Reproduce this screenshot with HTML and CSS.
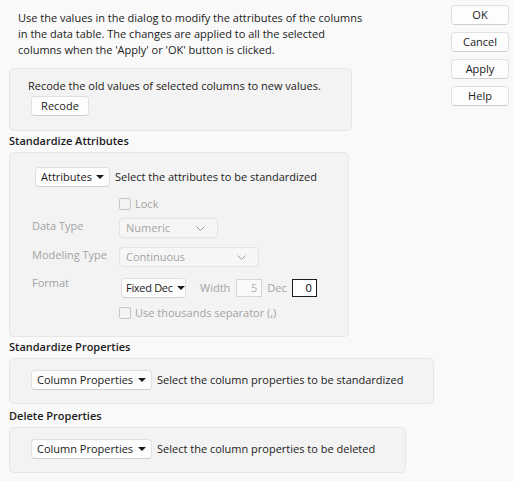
FILE: index.html
```html
<!DOCTYPE html>
<html lang="en">

<head>
    <meta charset="UTF-8">
    <title>Standardize Attributes</title>
    <link rel="stylesheet" href="styles.css">
</head>

<body>
    <div class="dialog">
        <div class="main">
            <p class="intro">Use the values in the dialog to modify the attributes of the columns<br>in the data table. The changes are applied to all the selected<br>columns when the 'Apply' or 'OK' button is clicked.</p>

            <div class="panel recode-panel">
                <div class="panel-text">Recode the old values of selected columns to new values.</div>
                <button class="btn recode-btn">Recode</button>
            </div>

            <h2 class="section-title">Standardize Attributes</h2>
            <div class="panel attr-panel">
                <div class="picker-row attr-picker">
                    <button class="menu-btn attr-btn">Attributes <span class="caret"></span></button>
                    <span>Select the attributes to be standardized</span>
                </div>

                <div class="field-row lock-row">
                    <span class="field-label"></span>
                    <label class="check disabled"><span class="box"></span>Lock</label>
                </div>
                <div class="field-row type-row">
                    <span class="field-label">Data Type</span>
                    <div class="combo combo-numeric">Numeric
                        <svg class="chevron" width="9" height="5" viewBox="0 0 9 5"><path d="M0.5 0.5 L4.5 4.5 L8.5 0.5" /></svg>
                    </div>
                </div>
                <div class="field-row modeling-row">
                    <span class="field-label">Modeling Type</span>
                    <div class="combo combo-modeling">Continuous
                        <svg class="chevron" width="9" height="5" viewBox="0 0 9 5"><path d="M0.5 0.5 L4.5 4.5 L8.5 0.5" /></svg>
                    </div>
                </div>
                <div class="field-row format-row">
                    <span class="field-label">Format</span>
                    <div class="format-controls">
                        <button class="menu-btn fixed-btn">Fixed Dec <span class="caret"></span></button>
                        <span class="muted width-label">Width</span>
                        <span class="num-box disabled">5</span>
                        <span class="muted dec-label">Dec</span>
                        <span class="num-box active">0</span>
                    </div>
                </div>
                <div class="field-row sep-row">
                    <span class="field-label"></span>
                    <label class="check disabled"><span class="box"></span>Use thousands separator (,)</label>
                </div>
            </div>

            <h2 class="section-title">Standardize Properties</h2>
            <div class="panel props-panel">
                <div class="picker-row">
                    <button class="menu-btn props-btn">Column Properties <span class="caret"></span></button>
                    <span>Select the column properties to be standardized</span>
                </div>
            </div>

            <h2 class="section-title delete-title">Delete Properties</h2>
            <div class="panel delete-panel">
                <div class="picker-row">
                    <button class="menu-btn props-btn">Column Properties <span class="caret"></span></button>
                    <span>Select the column properties to be deleted</span>
                </div>
            </div>
        </div>

        <div class="actions">
            <button class="btn">OK</button>
            <button class="btn">Cancel</button>
            <button class="btn">Apply</button>
            <button class="btn">Help</button>
        </div>
    </div>
</body>

</html>
```

FILE: styles.css
```css
body {
    margin: 0;
    background: #f9f9f9;
    color: #1b1b1b;
    font-family: 'Segoe UI', 'Open Sans', sans-serif;
    font-size: 11px;
    line-height: 16px;
}

.dialog {
    display: flex;
    justify-content: space-between;
    padding: 5px 5px 0 9px;
}

.main {
    display: flex;
    flex-direction: column;
    align-items: flex-start;
}

.intro {
    margin: 5px 0 10px 9px;
}

.panel {
    background: #f3f3f3;
    border: 1px solid #e6e6e6;
    border-radius: 5px;
    box-sizing: border-box;
}

.recode-panel {
    width: 343px;
    height: 63px;
    padding: 9px 0 0 18px;
}

.attr-panel {
    width: 340px;
    height: 185px;
    padding: 14px 0 0 22px;
}

.props-panel {
    width: 425px;
    height: 46px;
    padding: 11px 0 0 21px;
}

.delete-panel {
    width: 397px;
    height: 46px;
    padding: 11px 0 0 21px;
}

.section-title {
    margin: 2px 0 3px 0;
    font-size: 11px;
    font-weight: 600;
    line-height: 16px;
}

.delete-title {
    margin-top: 4px;
}

.btn {
    display: block;
    height: 20px;
    padding: 0;
    font: inherit;
    color: #1b1b1b;
    background: #fdfdfd;
    border: 1px solid #e0e0e0;
    border-bottom-color: #cfcfcf;
    border-radius: 4px;
}

.recode-btn {
    width: 58px;
    margin: 2px 0 0 3px;
}

.actions {
    display: flex;
    flex-direction: column;
    gap: 7px;
}

.actions .btn {
    width: 58px;
}

/* dropdown menu button with a small filled triangle */
.menu-btn {
    display: inline-flex;
    align-items: center;
    justify-content: space-between;
    box-sizing: border-box;
    height: 20px;
    padding: 0 5px 0 5px;
    font: inherit;
    color: #1b1b1b;
    background: #fdfdfd;
    border: 1px solid #e0e0e0;
    border-bottom-color: #d0d0d0;
    border-radius: 4px;
    white-space: nowrap;
}

.attr-btn {
    width: 75px;
}

.fixed-btn {
    width: 65px;
    padding-left: 4px;
    letter-spacing: -0.3px;
}

.props-btn {
    width: 121px;
}

.caret {
    width: 0;
    height: 0;
    margin-left: 4px;
    border-left: 4px solid transparent;
    border-right: 4px solid transparent;
    border-top: 4px solid #1b1b1b;
}

.picker-row {
    display: flex;
    align-items: center;
    gap: 5px;
}

.attr-picker {
    margin-left: 3px;
}

.field-row {
    display: flex;
    align-items: flex-start;
}

.field-label {
    width: 87px;
    flex-shrink: 0;
    color: #a3a3a3;
}

.lock-row {
    margin-top: 9px;
}

.type-row {
    margin-top: 6px;
}

.modeling-row {
    margin-top: 9px;
}

.format-row {
    margin-top: 11px;
}

.format-row .field-label {
    margin-top: -3px;
}

.sep-row {
    margin-top: 7px;
}

.check {
    display: flex;
    align-items: center;
    gap: 4px;
}

.check.disabled {
    color: #a3a3a3;
}

.box {
    width: 10px;
    height: 10px;
    border: 1px solid #c6c6c6;
    border-radius: 2px;
    background: #f3f3f3;
}

.combo {
    display: flex;
    align-items: center;
    justify-content: space-between;
    box-sizing: border-box;
    height: 20px;
    padding: 0 12px 0 6px;
    color: #a3a3a3;
    background: #f6f6f6;
    border: 1px solid #e3e3e3;
    border-radius: 4px;
}

.combo-numeric {
    width: 99px;
}

.combo-modeling {
    width: 140px;
}

.chevron {
    fill: none;
    stroke: #9a9a9a;
    stroke-width: 1;
}

.format-controls {
    display: flex;
    align-items: center;
    margin-left: 2px;
}

.muted {
    color: #a3a3a3;
}

.width-label {
    margin: 0 6px 0 14px;
}

.dec-label {
    margin: 0 5px 0 5px;
}

.num-box {
    box-sizing: border-box;
    width: 26px;
    height: 18px;
    padding-right: 4px;
    text-align: right;
    line-height: 16px;
    background: #f9f9f9;
}

.num-box.disabled {
    color: #b0b0b0;
    border: 1px solid #d6d6d6;
}

.num-box.active {
    width: 25px;
    color: #000;
    background: #fff;
    border: 1px solid #1b1b1b;
}
```
